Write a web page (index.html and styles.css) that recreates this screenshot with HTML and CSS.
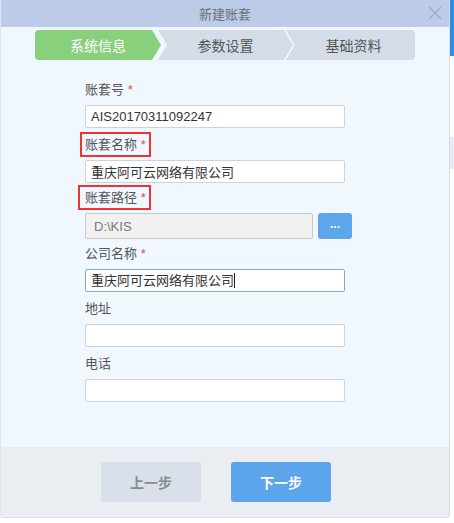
FILE: index.html
```html
<!DOCTYPE html>
<html lang="zh-CN">
<head>
    <meta charset="UTF-8">
    <meta name="viewport" content="width=device-width, initial-scale=1.0">
    <title>新建账套</title>
    <link rel="stylesheet" href="styles.css">
</head>
<body>
    <div class="dialog">
        <div class="dialog-header">
            <span class="dialog-title">新建账套</span>
            <span class="close">
                <svg width="14" height="14" viewBox="0 0 14 14"><path d="M1 1L13 13M13 1L1 13" stroke="#9fabbf" stroke-width="1.4" fill="none"/></svg>
            </span>
        </div>

        <div class="dialog-body">
            <!-- step indicator -->
            <div class="steps">
                <div class="step first active">系统信息</div>
                <div class="step middle">参数设置</div>
                <div class="step last">基础资料</div>
            </div>

            <div class="form">
                <div class="field">
                    <label class="field-label">账套号 <em>*</em></label>
                    <input class="input" type="text" value="AIS20170311092247">
                </div>
                <div class="field">
                    <label class="field-label"><span class="mark">账套名称 <em>*</em></span></label>
                    <input class="input" type="text" value="重庆阿可云网络有限公司">
                </div>
                <div class="field path-field">
                    <label class="field-label"><span class="mark mark-wide">账套路径 <em>*</em></span></label>
                    <div class="path-row">
                        <input class="input disabled" type="text" value="D:\KIS" disabled>
                        <button class="browse">...</button>
                    </div>
                </div>
                <div class="field">
                    <label class="field-label">公司名称 <em>*</em></label>
                    <div class="input focused">重庆阿可云网络有限公司<span class="caret"></span></div>
                </div>
                <div class="field">
                    <label class="field-label">地址</label>
                    <input class="input" type="text" value="">
                </div>
                <div class="field">
                    <label class="field-label">电话</label>
                    <input class="input" type="text" value="">
                </div>
            </div>
        </div>

        <div class="dialog-footer">
            <button class="btn btn-prev">上一步</button>
            <button class="btn btn-next">下一步</button>
        </div>
    </div>
</body>
</html>
```

FILE: styles.css
```css
body {
    margin: 0;
    font-family: "Liberation Sans", "Noto Sans CJK SC", sans-serif;
    font-size: 13px;
    color: #555;
    background-color: #fff;
    background-image: linear-gradient(#2b8ee6, #2b8ee6), linear-gradient(#e8ecf1, #e8ecf1);
    background-repeat: no-repeat;
    background-size: 4px 56px, 4px 32px;
    background-position: 450px 0, 450px 137px;
}
.dialog {
    width: 448px;
    border-left: 1px solid #dfe5ee;
    border-right: 1px solid #d6dde8;
    border-bottom: 1px solid #d9dfe8;
    border-radius: 0 0 3px 3px;
    overflow: hidden;
}
.dialog-header {
    height: 27px;
    background-color: #bccbe8;
    display: flex;
    align-items: center;
    justify-content: center;
    position: relative;
}
.dialog-title {
    color: #6b6f78;
    font-size: 13px;
}
.close {
    position: absolute;
    right: 7px;
    top: 6px;
    width: 14px;
    height: 14px;
}
.dialog-body {
    background-color: #f0f7fe;
    height: 420px;
    padding-top: 3px;
    box-sizing: border-box;
}
.steps {
    display: flex;
    margin-left: 34px;
    width: 380px;
    height: 30px;
}
.step {
    display: flex;
    align-items: center;
    justify-content: center;
    font-size: 14px;
    color: #555;
    background-color: #d4dde7;
}
.step.active {
    background-color: #88d07c;
    color: #fff;
}
.step.first {
    width: 128px;
    border-radius: 4px 0 0 4px;
    clip-path: polygon(0 0, calc(100% - 9px) 0, 100% 50%, calc(100% - 9px) 100%, 0 100%);
}
.step.middle {
    width: 137px;
    margin-left: -3px;
    clip-path: polygon(0 0, calc(100% - 9px) 0, 100% 50%, calc(100% - 9px) 100%, 0 100%, 9px 50%);
}
.step.last {
    width: 125px;
    margin-left: -7px;
    padding-left: 6px;
    border-radius: 0 4px 4px 0;
    clip-path: polygon(0 0, 100% 0, 100% 100%, 0 100%, 9px 50%);
}
.form {
    padding: 21px 0 0 84px;
    width: 270px;
}
.field {
    margin-bottom: 8px;
}
.field-label {
    display: block;
    height: 18px;
    line-height: 18px;
    margin-bottom: 6px;
    color: #555;
}
.field-label em {
    font-style: normal;
    color: #e94b4b;
}
.mark {
    position: relative;
}
.mark::after {
    content: "";
    position: absolute;
    left: -5px;
    right: -5px;
    top: -5px;
    bottom: -5px;
    border: 2px solid #f23232;
}
.mark-wide::after {
    left: -7px;
}
.input {
    display: block;
    box-sizing: border-box;
    width: 260px;
    height: 23px;
    margin: 0;
    padding: 0 5px;
    border: 1px solid #cdd3dd;
    border-radius: 2px;
    background-color: #fff;
    font-family: "Liberation Sans", "Noto Sans CJK SC", sans-serif;
    font-size: 13px;
    color: #333;
    line-height: 21px;
}
.input.focused {
    border-color: #82aad4;
}
.caret {
    display: inline-block;
    width: 1px;
    height: 15px;
    background-color: #222;
    vertical-align: -3px;
}
.path-field {
    margin-top: -2px;
    margin-bottom: 6px;
}
.path-row {
    display: flex;
    align-items: center;
    gap: 5px;
}
.input.disabled {
    flex-shrink: 0;
    width: 228px;
    height: 26px;
    background-color: #f1f1f1;
    border-color: #c8c8c8;
    color: #777;
    padding-left: 8px;
}
.browse {
    flex-shrink: 0;
    width: 34px;
    height: 26px;
    margin-top: -1px;
    border: none;
    border-radius: 3px;
    background-color: #5ea6ec;
    color: #fff;
    font-weight: bold;
    font-size: 12px;
    padding: 0 0 4px;
}
.dialog-footer {
    height: 70px;
    background-color: #eaedf2;
    display: flex;
    align-items: center;
    padding-left: 100px;
    gap: 30px;
}
.btn {
    width: 100px;
    height: 40px;
    border: none;
    border-radius: 3px;
    font-family: "Liberation Sans", "Noto Sans CJK SC", sans-serif;
    font-size: 14px;
    font-weight: bold;
}
.btn-prev {
    background-color: #d9e0ea;
    color: #8a8a8a;
}
.btn-next {
    background-color: #5ca5eb;
    color: #fff;
}
```
